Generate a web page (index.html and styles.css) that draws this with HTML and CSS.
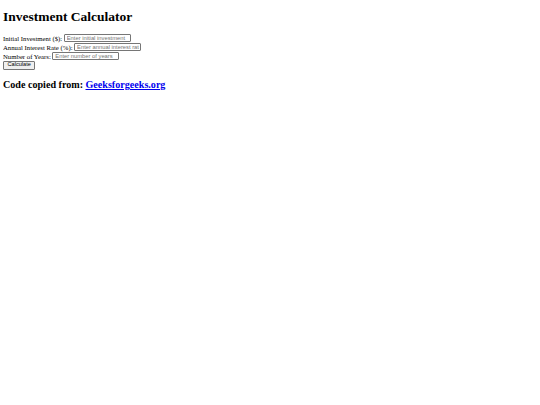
FILE: index.html
```html
<!DOCTYPE html>
<html>
<head>
<meta charset="utf-8">
<title>Investment Calculator</title>
<link rel="stylesheet" href="styles.css">
</head>
<body>
<h1 class="title">Investment Calculator</h1>
<form class="calc">
<div class="row"><label for="initial">Initial Investment ($):</label><input type="number" id="initial" class="field" placeholder="Enter initial investment"></div>
<div class="row"><label for="rate">Annual Interest Rate (%):</label><input type="number" id="rate" class="field" placeholder="Enter annual interest rate"></div>
<div class="row"><label for="years">Number of Years:</label><input type="number" id="years" class="field" placeholder="Enter number of years"></div>
<div class="row row-btn"><button type="button" class="btn">Calculate</button></div>
</form>
<div class="result"></div>
<h2 class="credit">Code copied from: <a href="#" class="link">Geeksforgeeks.org</a></h2>
</body>
</html>
```
FILE: styles.css
```css
html {
  background: #fff;
}
body {
  margin: 3px;
  font-family: "Liberation Serif", "Times New Roman", serif;
  font-size: 6.75px;
  color: #000;
}
.title {
  font-size: 13.5px;
  font-weight: bold;
  line-height: 15.5px;
  margin: 6px 0 9px;
}
.calc {
  display: flex;
  flex-direction: column;
}
.row {
  display: flex;
  align-items: center;
  height: 9px;
  gap: 1.5px;
}
.row-btn {
  height: 9.5px;
}
.field {
  box-sizing: border-box;
  width: 67px;
  height: 8px;
  margin: 0;
  padding: 0 1px 0 2px;
  font-family: "Liberation Sans", Arial, sans-serif;
  font-size: 5.8px;
  border: 0.5px solid #767676;
  border-radius: 1px;
  background: #fff;
  -moz-appearance: textfield;
  appearance: textfield;
}
.field::-webkit-inner-spin-button,
.field::-webkit-outer-spin-button {
  -webkit-appearance: none;
  margin: 0;
  display: none;
}
.field::placeholder {
  color: #757575;
}
.btn {
  box-sizing: border-box;
  height: 9px;
  margin: 0;
  padding: 0 3.5px;
  font-family: "Liberation Sans", Arial, sans-serif;
  font-size: 5.6px;
  line-height: 1;
  color: #000;
  background: #efefef;
  border: 0.5px solid #767676;
  border-radius: 1px;
}
.credit {
  font-size: 10.1px;
  font-weight: bold;
  line-height: 11.6px;
  margin: 9px 0;
}
.link {
  color: #0000ee;
  text-decoration: underline;
}
```
